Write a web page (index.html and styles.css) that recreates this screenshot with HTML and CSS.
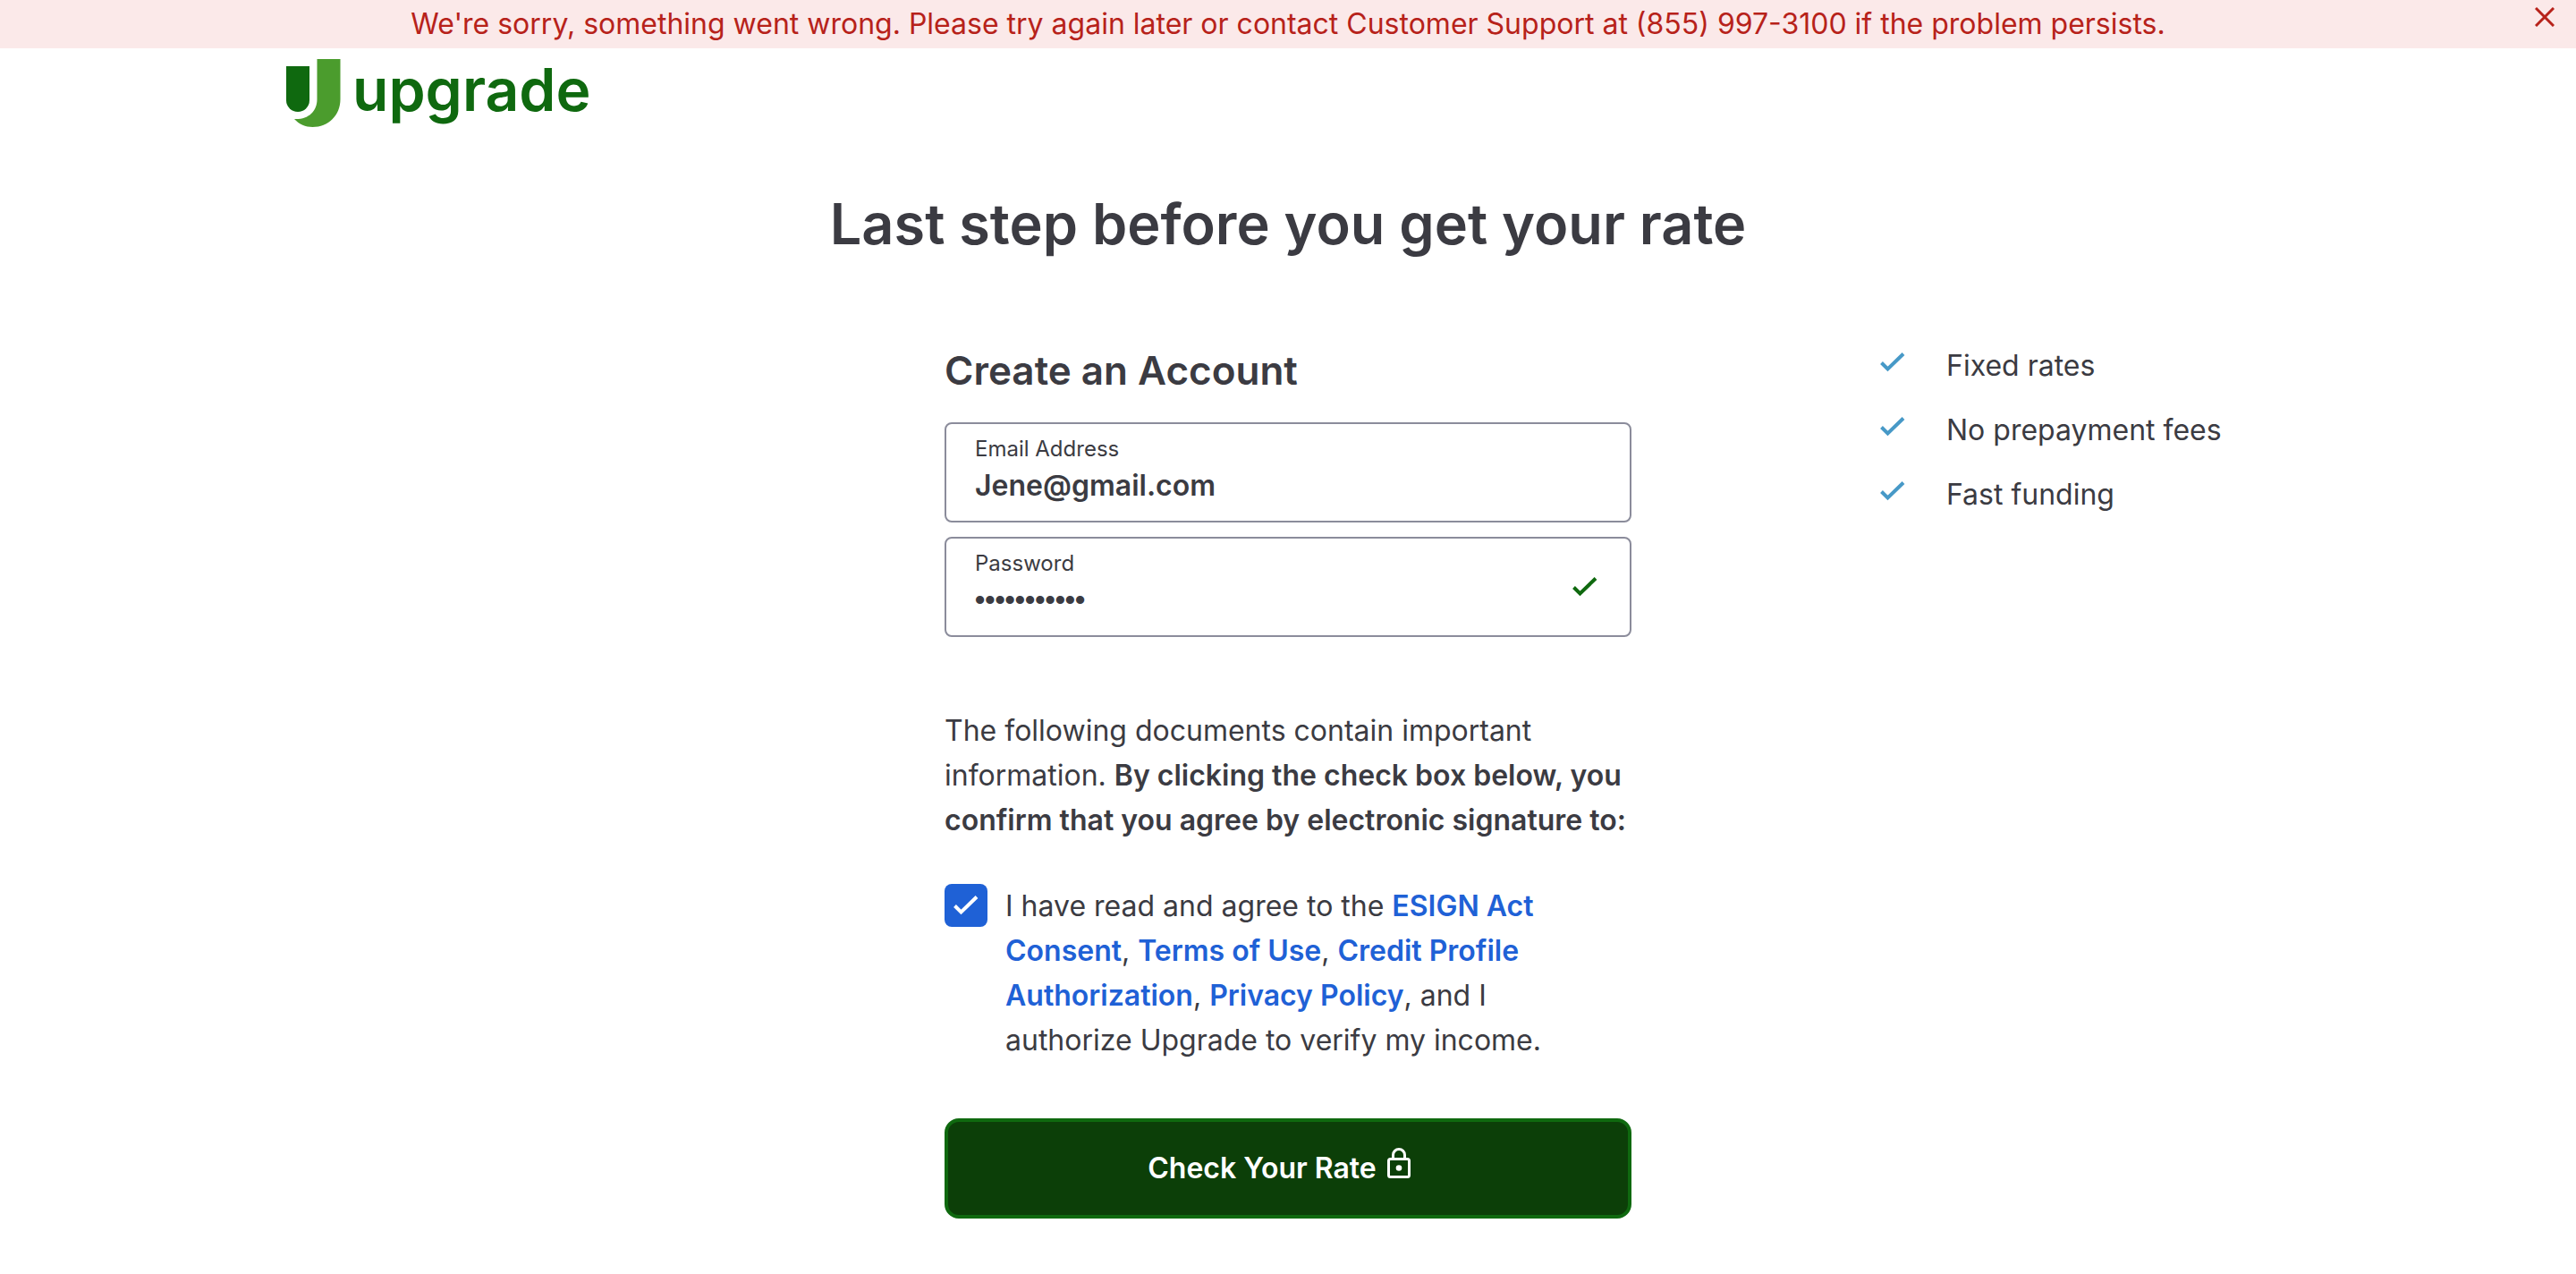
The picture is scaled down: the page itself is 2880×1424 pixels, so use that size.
FILE: index.html
```html
<!DOCTYPE html>
<html lang="en">
<head>
  <meta charset="utf-8">
  <meta name="viewport" content="width=device-width, initial-scale=1">
  <title>Create an Account | Upgrade</title>
  <link rel="stylesheet" href="styles.css">
</head>
<body>
  <div class="alert" role="alert">
    <p class="alert-text">We're sorry, something went wrong. Please try again later or contact Customer Support at (855) 997-3100 if the problem persists.</p>
    <button class="alert-close" type="button" aria-label="Close">
      <svg width="22" height="22" viewBox="0 0 22 22" fill="none" stroke="currentColor" stroke-width="3"><path d="M1 1 21 21M21 1 1 21"/></svg>
    </button>
  </div>

  <div class="container">
    <header class="header">
      <a class="logo" href="#" aria-label="Upgrade">
        <svg width="62" height="76" viewBox="0 0 62 76"><path fill="#0f690f" d="M0 8h26v38a13 13 0 0 1-26 0z"/><path fill="#4b9c2d" d="M34.500 0H60.500V45C60.500 63 47 76 29.500 76 21.500 76 14.500 73 9 67 24 68 34.500 59 34.500 45z"/></svg>
        <span class="logo-name">upgrade</span>
      </a>
    </header>

    <h1 class="title">Last step before you get your rate</h1>

    <main class="columns">
      <form class="form">
        <h2 class="form-title">Create an Account</h2>

        <div class="field">
          <div class="field-body">
            <label class="field-label" for="email">Email Address</label>
            <input class="field-input" id="email" type="email" value="Jene@gmail.com">
          </div>
        </div>
        <div class="field">
          <div class="field-body">
            <label class="field-label" for="password">Password</label>
            <input class="field-input" id="password" type="password" value="password123">
          </div>
          <svg class="check check-valid" viewBox="0 0 28 22"><path d="M1.500 11.500 8.500 18.500 26 1.500"/></svg>
        </div>

        <p class="notice">The following documents contain important information. <strong>By clicking the check box below, you confirm that you agree by electronic signature to:</strong></p>

        <div class="consent">
          <span class="tickbox">
            <input class="tickbox-input" id="consent" type="checkbox" checked>
            <svg class="check tickbox-mark" viewBox="0 0 28 22"><path d="M1.500 11.500 8.500 18.500 26 1.500"/></svg>
          </span>
          <label class="consent-text" for="consent">I have read and agree to the <a href="#">ESIGN Act Consent</a>, <a href="#">Terms of Use</a>, <a href="#">Credit Profile Authorization</a>, <a href="#">Privacy Policy</a>, and I authorize Upgrade to verify my income.</label>
        </div>

        <button class="submit" type="submit">
          <span>Check Your Rate</span>
          <svg class="lock" width="26" height="34" viewBox="0 0 26 34" fill="none" stroke="currentColor" stroke-width="3"><rect x="1.500" y="12.500" width="23" height="20" rx="2"/><path d="M6.500 12V8a6.500 6.500 0 0 1 13 0v4"/><circle cx="13" cy="22.500" r="3.300" fill="currentColor" stroke="none"/></svg>
        </button>
      </form>

      <ul class="benefits">
        <li class="benefit"><svg class="check" viewBox="0 0 28 22"><path d="M1.500 11.500 8.500 18.500 26 1.500"/></svg><span>Fixed rates</span></li>
        <li class="benefit"><svg class="check" viewBox="0 0 28 22"><path d="M1.500 11.500 8.500 18.500 26 1.500"/></svg><span>No prepayment fees</span></li>
        <li class="benefit"><svg class="check" viewBox="0 0 28 22"><path d="M1.500 11.500 8.500 18.500 26 1.500"/></svg><span>Fast funding</span></li>
      </ul>
    </main>
  </div>
</body>
</html>
```
FILE: styles.css
```css
* {
  box-sizing: border-box;
}

body {
  margin: 0;
  background: #fff;
  color: #3b3b42;
  font-family: Inter, "Liberation Sans", sans-serif;
  font-size: 32px;
  line-height: 50px;
}

h1, h2, p, ul {
  margin: 0;
  padding: 0;
}

h1, h2 {
  font-weight: 600;
}

a {
  color: #1f61d6;
  font-weight: 600;
  text-decoration: none;
}

strong {
  font-weight: 600;
}

/* Error banner */
.alert {
  display: flex;
  align-items: flex-start;
  background: #fbe9e9;
  color: #b7221a;
}

.alert-text {
  flex: 1;
  padding: 2px 0 2px 46px;
  text-align: center;
}

.alert-close {
  display: flex;
  padding: 8px 24px 8px 0;
  border: 0;
  background: none;
  color: inherit;
  cursor: pointer;
}

/* Page frame */
.container {
  width: 80%;
  margin: 0 auto;
}

.header {
  padding: 12px 32px 0;
}

.logo {
  display: inline-flex;
  gap: 12px;
  height: 80px;
}

.logo-name {
  color: #0f690f;
  font-size: 66px;
  font-weight: 600;
  line-height: 68px;
}

.title {
  padding-top: 54px;
  font-size: 63px;
  line-height: 80px;
  text-align: center;
}

.columns {
  display: grid;
  grid-template-columns: repeat(3, 1fr);
  padding-top: 94px;
}

.check {
  width: 28px;
  height: 22px;
  fill: none;
  stroke: currentColor;
  stroke-width: 4;
}

/* Account form */
.form {
  grid-column: 2;
}

.form-title {
  margin-bottom: 28px;
  font-size: 44px;
  line-height: 60px;
}

.field {
  display: flex;
  align-items: center;
  gap: 16px;
  margin-bottom: 16px;
  padding: 12px 36px 12px 32px;
  border: 2px solid #8b8c9b;
  border-radius: 8px;
}

.field-body {
  flex: 1;
}

.field-label {
  display: block;
  font-size: 24px;
  line-height: 32px;
}

.field-input {
  display: block;
  width: 100%;
  height: 52px;
  padding: 0 0 4px;
  border: 0;
  outline: 0;
  background: none;
  color: inherit;
  font: 600 32px/48px Inter, "Liberation Sans", sans-serif;
}

.field-input[type="password"] {
  font-family: "Liberation Sans", sans-serif;
}

.check-valid {
  color: #0f690f;
}

.notice {
  padding-top: 64px;
}

.consent {
  display: flex;
  gap: 20px;
  padding-top: 46px;
}

.tickbox {
  display: grid;
  flex: none;
  width: 48px;
  height: 48px;
}

.tickbox-input,
.tickbox-mark {
  grid-area: 1 / 1;
}

.tickbox-input {
  width: 48px;
  height: 48px;
  margin: 0;
  border-radius: 8px;
  background: #1f61d6;
  appearance: none;
}

.tickbox-mark {
  place-self: center;
  color: #fff;
  pointer-events: none;
}

.consent-text {
  flex: 1;
  padding-right: 64px;
}

.submit {
  display: flex;
  align-items: center;
  justify-content: center;
  gap: 12px;
  width: 100%;
  height: 112px;
  margin-top: 62px;
  padding: 0 20px 0 0;
  border: 4px solid #0f690f;
  border-radius: 16px;
  background: #0c3f08;
  color: #fff;
  font: 600 32px/48px Inter, "Liberation Sans", sans-serif;
  cursor: pointer;
}

.lock {
  margin-bottom: 12px;
}

/* Loan benefits */
.benefits {
  grid-column: 3;
  padding-left: 278px;
  list-style: none;
}

.benefit {
  display: flex;
  gap: 46px;
  margin-bottom: 22px;
}

.benefit .check {
  margin-top: 10px;
  color: #4799c7;
}
```
